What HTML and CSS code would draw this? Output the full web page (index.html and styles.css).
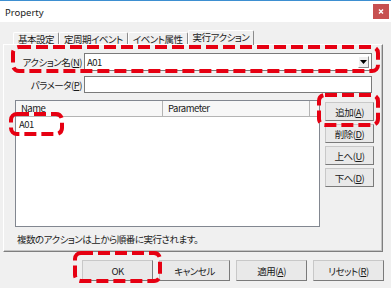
FILE: index.html
```html
<!DOCTYPE html>
<html>

<head>
    <title>Property</title>
    <meta charset="utf-8">
    <link rel="stylesheet" href="styles.css">
</head>

<body>
    <div class="window">
        <div class="titlebar">
            <span class="title">Property</span>
            <span class="close">
                <svg width="16" height="15" viewBox="0 0 16 15"><path d="M6 5.5l4 4M10 5.5l-4 4" stroke="#fff" stroke-width="1.4"/></svg>
            </span>
        </div>

        <div class="client">
            <div class="tabs">
                <div class="tab">基本設定</div>
                <div class="tab">定周期イベント</div>
                <div class="tab">イベント属性</div>
                <div class="tab active">実行アクション</div>
            </div>

            <div class="panel">
                <div class="field-row">
                    <label>アクション名(<u>N</u>)</label>
                    <div class="combo">
                        <span>A01</span>
                        <span class="drop"><svg width="7" height="4" viewBox="0 0 7 4"><path d="M0 0h7L3.5 4z" fill="#000"/></svg></span>
                    </div>
                </div>
                <div class="field-row second">
                    <label>パラメータ(<u>P</u>)</label>
                    <div class="edit"></div>
                </div>

                <div class="list-area">
                    <div class="listview">
                        <div class="lv-head">
                            <div class="col name">Name</div>
                            <div class="col param">Parameter</div>
                            <div class="col rest"></div>
                        </div>
                        <div class="lv-row">A01</div>
                    </div>
                    <div class="side-buttons">
                        <button>追加(<u>A</u>)</button>
                        <button>削除(<u>D</u>)</button>
                        <button>上へ(<u>U</u>)</button>
                        <button>下へ(<u>D</u>)</button>
                    </div>
                </div>

                <div class="note">複数のアクションは上から順番に実行されます。</div>
            </div>

            <div class="dialog-buttons">
                <button>OK</button>
                <button>キャンセル</button>
                <button>適用(<u>A</u>)</button>
                <button>リセット(<u>R</u>)</button>
            </div>
        </div>

        <!-- red callouts drawn over the dialog -->
        <svg class="marks" width="391" height="288" viewBox="0 0 391 288">
            <rect x="13" y="47" width="365" height="24" rx="6"/>
            <rect x="319" y="95" width="59" height="30" rx="6"/>
            <rect x="11" y="114" width="51" height="20" rx="6"/>
            <rect x="75" y="253" width="85" height="28" rx="6"/>
        </svg>
    </div>
</body>

</html>
```

FILE: styles.css
```css
* {
    box-sizing: border-box;
}

body {
    margin: 0;
    background: #f0f0f0;
    color: #1a1a1a;
    font-family: "Noto Sans CJK JP", "Noto Sans", sans-serif;
    font-size: 9.5px;
    letter-spacing: -0.5px;
    font-feature-settings: "palt";
}

.window {
    position: relative;
    width: 391px;
    height: 288px;
    background: #f0f0f0;
    overflow: hidden;
}

/* (A) TITLE BAR */

.titlebar {
    display: flex;
    align-items: flex-start;
    height: 22px;
    padding-top: 3px;
    background: #fff;
    border-top: 1px solid #3d8fd1;
}

.title {
    margin-left: 5px;
    line-height: 18px;
    font-family: "Noto Sans", sans-serif;
    font-size: 9.5px;
    letter-spacing: 0;
}

.close {
    display: flex;
    margin-left: auto;
    margin-right: 2px;
    width: 16px;
    height: 15px;
    background: #c75050;
}

/* (B) TABS */

.client {
    padding: 8px 0 0 3px;
}

.tabs {
    display: flex;
    align-items: flex-end;
    height: 15px;
    padding-left: 10px;
    margin-bottom: -1px;
    position: relative;
    z-index: 1;
}

.tab {
    height: 12px;
    margin-bottom: 1px;
    padding: 0 4px;
    line-height: 12px;
    border-top: 1px solid #fff;
    border-left: 1px solid #fff;
    border-right: 1px solid #8a8a8a;
    border-radius: 2px 2px 0 0;
    white-space: nowrap;
}

.tab.active {
    height: 15px;
    margin-bottom: 0;
    line-height: 13px;
    background: #f0f0f0;
}

.panel {
    width: 380px;
    height: 208px;
    padding-top: 8px;
    border-top: 1px solid #fff;
    border-left: 1px solid #fff;
    border-right: 1px solid #7e7e7e;
    border-bottom: 1px solid #7e7e7e;
    box-shadow: inset -1px -1px 0 #c4c4c4;
}

/* (C) FIELDS */

.field-row {
    display: grid;
    grid-template-columns: 78px 288px;
    column-gap: 2px;
    align-items: center;
}

.field-row.second {
    margin-top: 5px;
}

.field-row label {
    text-align: right;
    white-space: nowrap;
}

.combo,
.edit {
    background: #fff;
    border: 1px solid #7a7a7a;
}

.combo {
    display: flex;
    align-items: center;
    height: 18px;
    padding-left: 2px;
}

.drop {
    display: flex;
    align-items: center;
    justify-content: center;
    margin-left: auto;
    margin-right: 2px;
    width: 11px;
    height: 12px;
    background: #f0f0f0;
    border: 1px solid;
    border-color: #fff #8a8a8a #8a8a8a #fff;
}

.edit {
    height: 17px;
}

/* (D) LIST */

.list-area {
    display: flex;
    gap: 5px;
    margin: 7px 0 0 11px;
}

.listview {
    width: 305px;
    height: 127px;
    background: #fff;
    border: 1px solid #828790;
}

.lv-head {
    display: flex;
    height: 16px;
    background: #f7f7f7;
    border-bottom: 1px solid #b4b4b4;
}

.col {
    padding-left: 5px;
    line-height: 15px;
    border-right: 1px solid #b4b4b4;
}

.col.name,
.col.param {
    width: 147px;
}

.col.rest {
    flex-grow: 1;
    border-right: 0;
}

.lv-row {
    height: 15px;
    padding-left: 3px;
    line-height: 15px;
}

.side-buttons {
    display: flex;
    flex-direction: column;
    gap: 3px;
    padding-top: 2px;
}

button {
    padding: 0;
    font: inherit;
    letter-spacing: inherit;
    color: #1a1a1a;
    background: #e9e9e9;
    border: 1px solid;
    border-color: #c8c8c8 #7a7a7a #7a7a7a #c8c8c8;
}

.side-buttons button {
    width: 49px;
    height: 19px;
}

.note {
    margin-top: 5px;
    padding-left: 13px;
    line-height: 14px;
}

/* (E) DIALOG BUTTONS */

.dialog-buttons {
    display: flex;
    gap: 6px;
    margin-top: 8px;
    padding-left: 79px;
}

.dialog-buttons button {
    width: 71px;
    height: 21px;
}

/* (F) CALLOUTS */

.marks {
    position: absolute;
    top: 0;
    left: 0;
    pointer-events: none;
}

.marks rect {
    fill: none;
    stroke: #e60012;
    stroke-width: 4;
    stroke-dasharray: 12 5;
}
```
